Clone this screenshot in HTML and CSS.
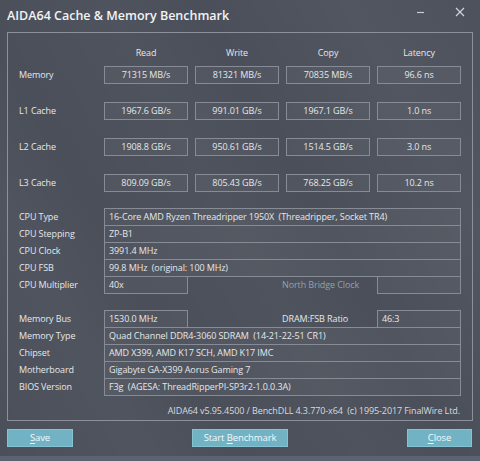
FILE: index.html
```html
<!DOCTYPE html>
<html>
<head>
<meta charset="utf-8">
<link rel="stylesheet" href="styles.css">
</head>
<body>
<div class="window">
  <div class="titlebar">
    <div class="title">AIDA64 Cache &amp; Memory Benchmark</div>
    <div class="controls">
      <svg class="ctl" width="12" height="12" viewBox="0 0 12 12"><path d="M2 6.5h7" stroke="#c9ccd2" stroke-width="1.2"/></svg>
      <svg class="ctl" width="12" height="12" viewBox="0 0 12 12"><path d="M2 2l8 8M10 2l-8 8" stroke="#d4d6db" stroke-width="1.1"/></svg>
    </div>
  </div>
  <div class="frame">
    <div class="grid heads">
      <div></div>
      <div class="head">Read</div>
      <div class="head">Write</div>
      <div class="head">Copy</div>
      <div class="head">Latency</div>
    </div>
    <div class="grid brow">
      <div class="lbl">Memory</div>
      <div class="box c">71315 MB/s</div>
      <div class="box c">81321 MB/s</div>
      <div class="box c">70835 MB/s</div>
      <div class="box c">96.6 ns</div>
    </div>
    <div class="grid brow">
      <div class="lbl">L1 Cache</div>
      <div class="box c">1967.6 GB/s</div>
      <div class="box c">991.01 GB/s</div>
      <div class="box c">1967.1 GB/s</div>
      <div class="box c">1.0 ns</div>
    </div>
    <div class="grid brow">
      <div class="lbl">L2 Cache</div>
      <div class="box c">1908.8 GB/s</div>
      <div class="box c">950.61 GB/s</div>
      <div class="box c">1514.5 GB/s</div>
      <div class="box c">3.0 ns</div>
    </div>
    <div class="grid brow">
      <div class="lbl">L3 Cache</div>
      <div class="box c">809.09 GB/s</div>
      <div class="box c">805.43 GB/s</div>
      <div class="box c">768.25 GB/s</div>
      <div class="box c">10.2 ns</div>
    </div>

    <div class="section cpu">
      <div class="grid irow">
        <div class="lbl">CPU Type</div>
        <div class="box wide">16-Core AMD Ryzen Threadripper 1950X&nbsp; (Threadripper, Socket TR4)</div>
      </div>
      <div class="grid irow">
        <div class="lbl">CPU Stepping</div>
        <div class="box wide">ZP-B1</div>
      </div>
      <div class="grid irow">
        <div class="lbl">CPU Clock</div>
        <div class="box wide">3991.4 MHz</div>
      </div>
      <div class="grid irow">
        <div class="lbl">CPU FSB</div>
        <div class="box wide">99.8 MHz&nbsp; (original: 100 MHz)</div>
      </div>
      <div class="grid irow">
        <div class="lbl">CPU Multiplier</div>
        <div class="box">40x</div>
        <div class="mid dim">North Bridge Clock</div>
        <div class="box last"></div>
      </div>
    </div>

    <div class="section mem">
      <div class="grid irow">
        <div class="lbl">Memory Bus</div>
        <div class="box">1530.0 MHz</div>
        <div class="mid">DRAM:FSB Ratio</div>
        <div class="box last">46:3</div>
      </div>
      <div class="grid irow">
        <div class="lbl">Memory Type</div>
        <div class="box wide">Quad Channel DDR4-3060 SDRAM&nbsp; (14-21-22-51 CR1)</div>
      </div>
      <div class="grid irow">
        <div class="lbl">Chipset</div>
        <div class="box wide">AMD X399, AMD K17 SCH, AMD K17 IMC</div>
      </div>
      <div class="grid irow">
        <div class="lbl">Motherboard</div>
        <div class="box wide">Gigabyte GA-X399 Aorus Gaming 7</div>
      </div>
      <div class="grid irow">
        <div class="lbl">BIOS Version</div>
        <div class="box wide">F3g&nbsp; (AGESA: ThreadRipperPI-SP3r2-1.0.0.3A)</div>
      </div>
    </div>

    <div class="footer">AIDA64 v5.95.4500 / BenchDLL 4.3.770-x64&nbsp; (c) 1995-2017 FinalWire Ltd.</div>
  </div>
  <div class="buttons">
    <div class="btn save"><u>S</u>ave</div>
    <div class="btn start">Start <u>B</u>enchmark</div>
    <div class="btn close"><u>C</u>lose</div>
  </div>
  <div class="strip"></div>
</div>
</body>
</html>
```
FILE: styles.css
```css
html, body {
  margin: 0;
  padding: 0;
}
body {
  width: 480px;
  height: 461px;
  overflow: hidden;
  font-family: "Open Sans", "Noto Sans", sans-serif;
  font-size: 9px;
  letter-spacing: -0.1px;
  color: #e6e7ea;
}
.window {
  width: 480px;
  height: 461px;
  display: flex;
  flex-direction: column;
  background:
    linear-gradient(60deg, rgba(255,255,255,0) 0%, rgba(255,255,255,0.03) 20%, rgba(255,255,255,0) 32%, rgba(255,255,255,0.025) 50%, rgba(255,255,255,0) 62%, rgba(255,255,255,0.04) 82%, rgba(255,255,255,0.015) 100%),
    #4a4f5a;
}
.titlebar {
  height: 32px;
  display: flex;
  align-items: flex-start;
  justify-content: space-between;
}
.title {
  font-size: 12.5px;
  font-weight: 600;
  letter-spacing: 0;
  color: #f2f3f5;
  padding: 7px 0 0 7px;
  line-height: 17px;
}
.controls {
  display: flex;
  gap: 27px;
  padding: 6px 14px 0 0;
}
.frame {
  margin: 0 7px;
  height: 389px;
  box-sizing: border-box;
  border: 1px solid #8b909a;
  padding: 11px 12px 0 11px;
  display: flex;
  flex-direction: column;
}
.grid {
  display: grid;
  grid-template-columns: 78px 84px 84px 84px 84px;
  column-gap: 7px;
}
.heads {
  height: 18px;
  align-items: center;
  margin-bottom: 4px;
}
.head {
  text-align: center;
  line-height: 18px;
}
.brow {
  height: 18px;
  margin-bottom: 17px;
}
.brow + .brow {
  margin-top: 1px;
}
.lbl {
  line-height: 18px;
  white-space: nowrap;
}
.box {
  height: 18px;
  box-sizing: border-box;
  border: 1px solid #868b95;
  background: rgba(255,255,255,0.035);
  line-height: 16px;
  padding: 0 4px;
  white-space: nowrap;
  overflow: hidden;
}
.box.c {
  text-align: center;
}
.box.wide {
  grid-column: 2 / 6;
}
.box.last {
  grid-column: 5;
}
.mid {
  grid-column: 4;
  margin-left: -4px;
  line-height: 18px;
  white-space: nowrap;
}
.dim {
  color: #93a2a6;
}
.section {
  display: flex;
  flex-direction: column;
}
.cpu {
  margin-top: -1px;
}
.mem {
  margin-top: 16px;
}
.irow {
  height: 18px;
}
.irow + .irow {
  margin-top: -1px;
}
.footer {
  margin-top: 7px;
  text-align: right;
  line-height: 16px;
  color: #d8dadf;
}
.buttons {
  height: 18px;
  margin-top: 8px;
  padding: 0 8px 0 7px;
  display: flex;
  justify-content: space-between;
  align-items: flex-start;
}
.btn {
  height: 18px;
  box-sizing: border-box;
  background: #71b3c5;
  border: 1px solid #86c3d2;
  color: #f4f8fa;
  text-align: center;
  line-height: 16px;
  font-size: 9.5px;
}
.btn u {
  text-decoration-thickness: 1px;
  text-underline-offset: 2px;
}
.save { width: 66px; }
.start { width: 96px; }
.close { width: 65px; }
.strip {
  margin-top: auto;
  height: 5px;
  background: #5b6271;
}
```
